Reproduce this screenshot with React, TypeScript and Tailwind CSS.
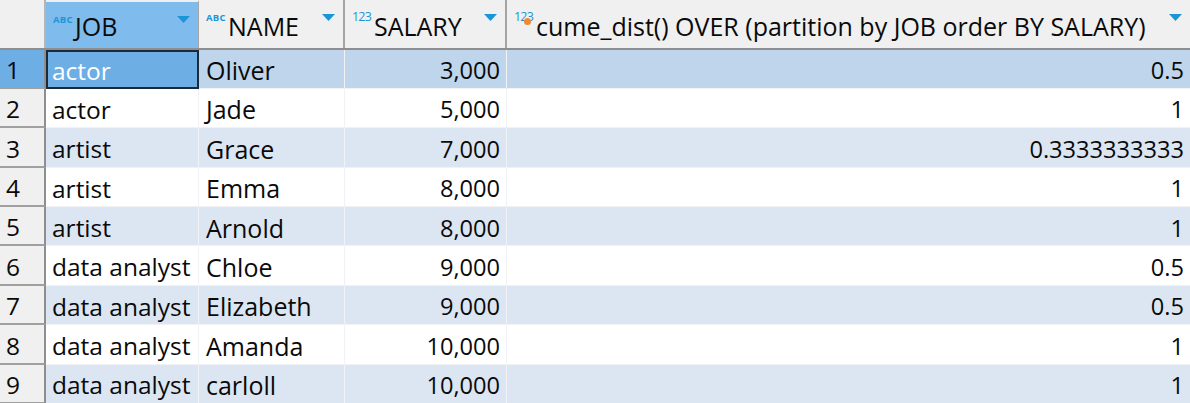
const rows = [
  ["actor", "Oliver", "3,000", "0.5"],
  ["actor", "Jade", "5,000", "1"],
  ["artist", "Grace", "7,000", "0.3333333333"],
  ["artist", "Emma", "8,000", "1"],
  ["artist", "Arnold", "8,000", "1"],
  ["data analyst", "Chloe", "9,000", "0.5"],
  ["data analyst", "Elizabeth", "9,000", "0.5"],
  ["data analyst", "Amanda", "10,000", "1"],
  ["data analyst", "carloll", "10,000", "1"],
];

function SortArrow() {
  return (
    <svg className="absolute right-[8px] top-[14px]" width="13" height="7" viewBox="0 0 13 7">
      <path d="M0 0H13L6.5 7Z" fill="#1a96d8" />
    </svg>
  );
}

function HeaderCell({
  label,
  type,
  className,
  dot,
}: {
  label: string;
  type: "ABC" | "123";
  className: string;
  dot?: boolean;
}) {
  return (
    <div className={`relative flex h-full shrink-0 items-end pb-[6px] ${className}`}>
      <span
        className={`absolute left-[7px] leading-none text-[#1a96d8] ${
          type === "ABC" ? "top-[13px] text-[9.5px] font-bold tracking-[0.3px]" : "top-[11px] text-[12.5px] tracking-[-0.8px]"
        }`}
      >
        {type}
      </span>
      {dot && <span className="absolute left-[17px] top-[18px] h-[7px] w-[7px] rounded-full bg-[#ee8a35]" />}
      <span className="pl-[29px] text-[25px] leading-[32px] whitespace-nowrap">{label}</span>
      <SortArrow />
    </div>
  );
}

export default function App() {
  return (
    <div className="h-[403px] w-[1190px] overflow-hidden bg-white font-['Open_Sans',sans-serif] text-[24.5px] text-[#0a0a0a]">
      <div className="flex h-[49.5px] border-b-2 border-[#8e8e8e] bg-[#f0f0f0]">
        <div className="h-full w-[46px] shrink-0 border-r-2 border-[#b5b5b5]" />
        <HeaderCell label="JOB" type="ABC" className="w-[153px] border-t-2 border-r border-t-[#f0f0f0] border-r-[#a5a5a5] bg-[#7fbbec]" />
        <HeaderCell label="NAME" type="ABC" className="w-[146px] border-r-2 border-[#a5a5a5]" />
        <HeaderCell label="SALARY" type="123" className="w-[162px] border-r-2 border-[#a5a5a5]" />
        <HeaderCell label="cume_dist() OVER (partition by JOB order BY SALARY)" type="123" dot className="flex-1" />
      </div>
      {rows.map((row, i) => {
        const selected = i === 0;
        const bg = selected ? "bg-[#bed5ec]" : i % 2 === 0 ? "bg-[#dce6f2]" : "bg-white";
        return (
          <div key={i} className="flex h-[39.4px]">
            <div
              className={`flex h-full w-[46px] shrink-0 items-center border-r-2 border-b-2 border-r-[#8e8e8e] border-b-[#a0a0a0] pt-[4px] pl-[6px] ${
                selected ? "bg-[#6daee5]" : "bg-[#f0f0f0]"
              }`}
            >
              {i + 1}
            </div>
            <div
              className={`flex h-full w-[153px] shrink-0 items-center pt-[4px] whitespace-nowrap ${
                selected
                  ? "border-2 border-[#1c2a38] bg-[#6daee5] pl-[4px] text-white"
                  : `border-r border-b border-[#f0f2f5] pl-[6px] ${bg}`
              }`}
            >
              {row[0]}
            </div>
            <div className={`flex h-full w-[146px] shrink-0 items-center border-r border-b border-[#f0f2f5] pt-[4px] pl-[7px] text-[25px] ${bg}`}>
              {row[1]}
            </div>
            <div className={`flex h-full w-[162px] shrink-0 items-center justify-end border-r border-b border-[#f0f2f5] pt-[4px] pr-[6px] text-[23.6px] ${bg}`}>
              {row[2]}
            </div>
            <div className={`flex h-full flex-1 items-center justify-end border-b border-[#f0f2f5] pt-[4px] pr-[6px] text-[23.6px] ${bg}`}>
              {row[3]}
            </div>
          </div>
        );
      })}
    </div>
  );
}
